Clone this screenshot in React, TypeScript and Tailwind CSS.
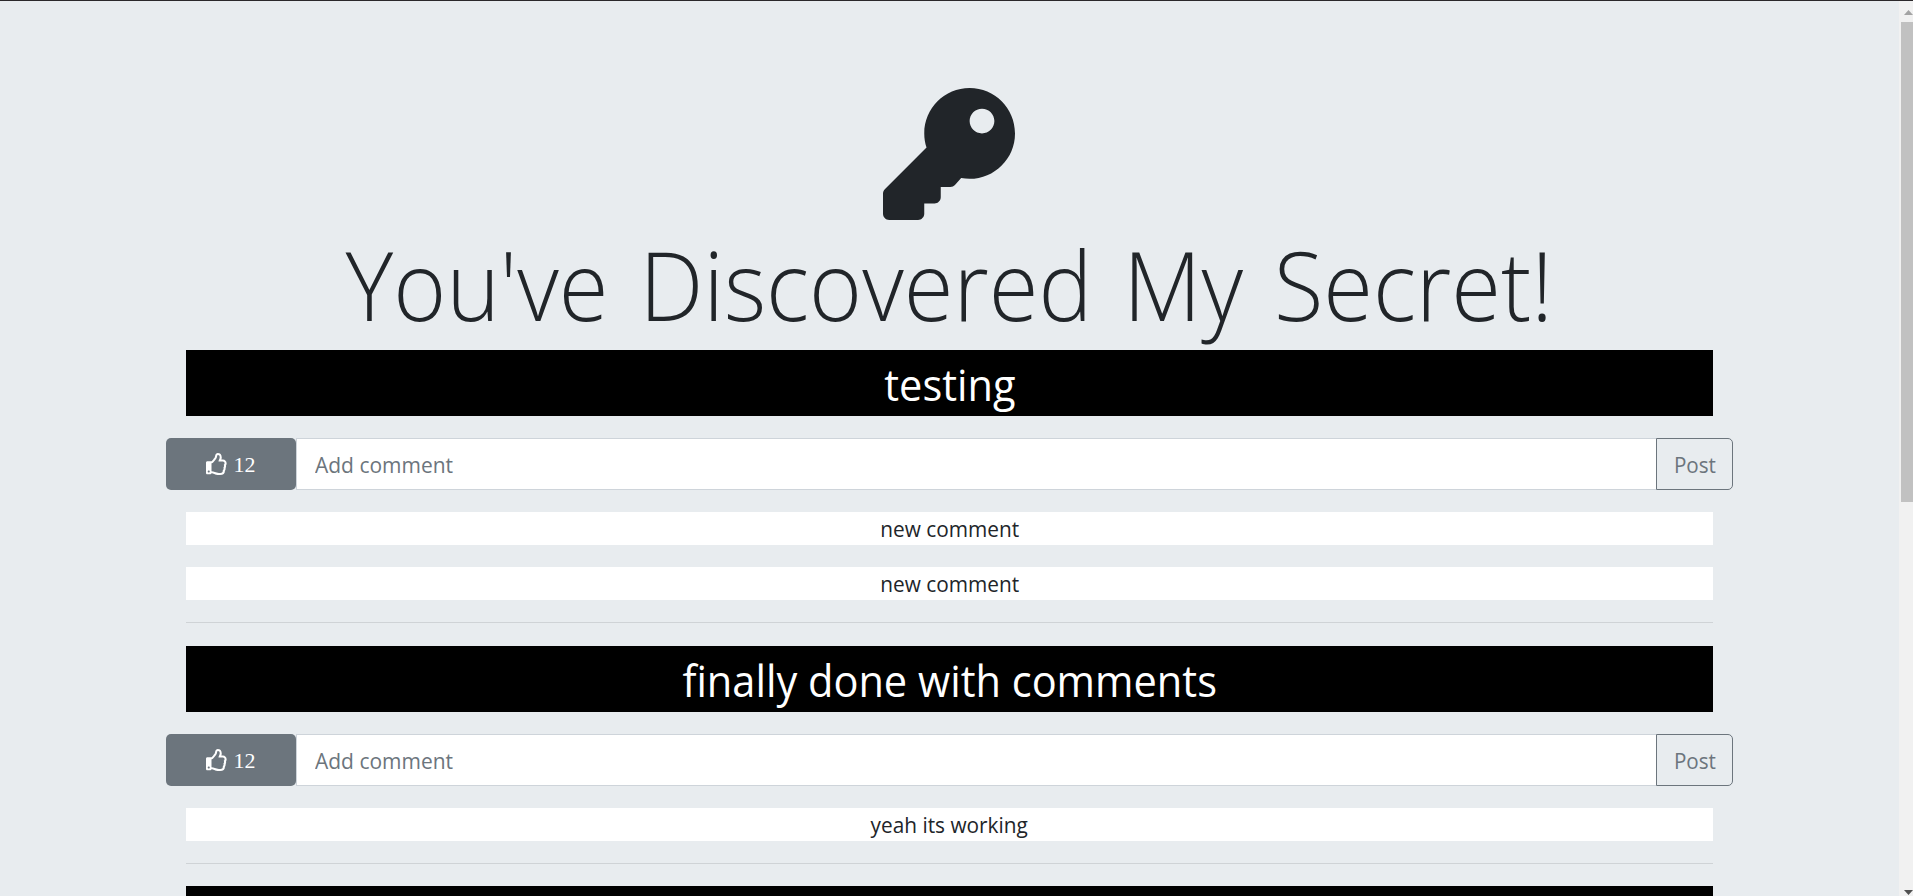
import { FaKey, FaRegThumbsUp } from "react-icons/fa";

type Secret = { text: string; likes: number; comments: string[] };

const secrets: Secret[] = [
  { text: "testing", likes: 12, comments: ["new comment", "new comment"] },
  { text: "finally done with comments", likes: 12, comments: ["yeah its working"] },
];

function SecretTitle({ text }: { text: string }) {
  return (
    <h2 className="h-[66px] overflow-hidden bg-black text-center text-[43px] leading-[70px] text-white">
      <span className="inline-block scale-x-[.966]">{text}</span>
    </h2>
  );
}

function SecretCard({ text, likes, comments }: Secret) {
  return (
    <section className="first-of-type:mb-[23px]">
      <SecretTitle text={text} />
      <form className="-mx-5 mt-[22px] flex h-[52px] text-[21.5px] leading-[51px]">
        <button
          type="button"
          className="flex w-[130px] items-center justify-center gap-1.5 rounded-[5px] bg-[#6c757d] pr-px font-['Liberation_Serif',serif] text-[22px] text-white"
        >
          <FaRegThumbsUp className="size-[22px]" />
          <span>{likes}</span>
        </button>
        <div className="flex-1 border border-r-0 border-[#ced4da] bg-white pl-[17.5px] text-[#6c757d]">
          <span className="inline-block origin-left scale-x-[.976]">Add comment</span>
        </div>
        <button
          type="button"
          className="w-[77px] rounded-r-[5px] border border-[#6c757d] text-center text-[#6c757d]"
        >
          <span className="inline-block scale-x-[.96]">Post</span>
        </button>
      </form>
      {comments.map((comment, i) => (
        <p key={i} className="mt-[22px] h-[33px] bg-white text-center text-[21.5px] leading-[33px]">
          <span className="inline-block scale-x-[.968]">{comment}</span>
        </p>
      ))}
      <hr className="my-[22px] border-t border-[#cfd3d6]" />
    </section>
  );
}

function Scrollbar() {
  return (
    <div className="flex w-[14px] flex-col overflow-hidden bg-[#f1f1f1] pl-[2px]">
      <div className="flex h-[21px] shrink-0 items-start pt-[9px] pl-[3px]">
        <svg width="9" height="5" viewBox="0 0 9 5" className="shrink-0 fill-[#a3a3a3]">
          <path d="M0 5 4.5 0 9 5z" />
        </svg>
      </div>
      <div className="h-[480px] w-[14px] shrink-0 bg-[#c1c1c1]" />
      <div className="mt-auto flex h-[6px] shrink-0 pl-[3px]">
        <svg width="9" height="5" viewBox="0 0 9 5" className="shrink-0 fill-[#505050]">
          <path d="M0 0h9L4.500 5z" />
        </svg>
      </div>
    </div>
  );
}

export default function App() {
  return (
    <div className="flex h-[896px] overflow-hidden border-t border-[#2b282b] bg-[#e9ecef] font-['Open_Sans','Noto_Sans',sans-serif] text-[#212529]">
      <main className="flex-1 overflow-hidden bg-[#e8ecef] px-[186px] pt-[87px]">
        <header className="flex h-[262px] flex-col items-center">
          <FaKey className="mr-px size-[132px] shrink-0" />
          <h1 className="mt-[11px] text-[96.6px] leading-[105px] font-light whitespace-nowrap">
            <span className="inline-block scale-x-[.937] [word-spacing:8px]">
              You've Discovered My Secret!
            </span>
          </h1>
        </header>
        {secrets.map((secret, i) => (
          <SecretCard key={i} {...secret} />
        ))}
        <SecretTitle text="" />
      </main>
      <Scrollbar />
    </div>
  );
}
